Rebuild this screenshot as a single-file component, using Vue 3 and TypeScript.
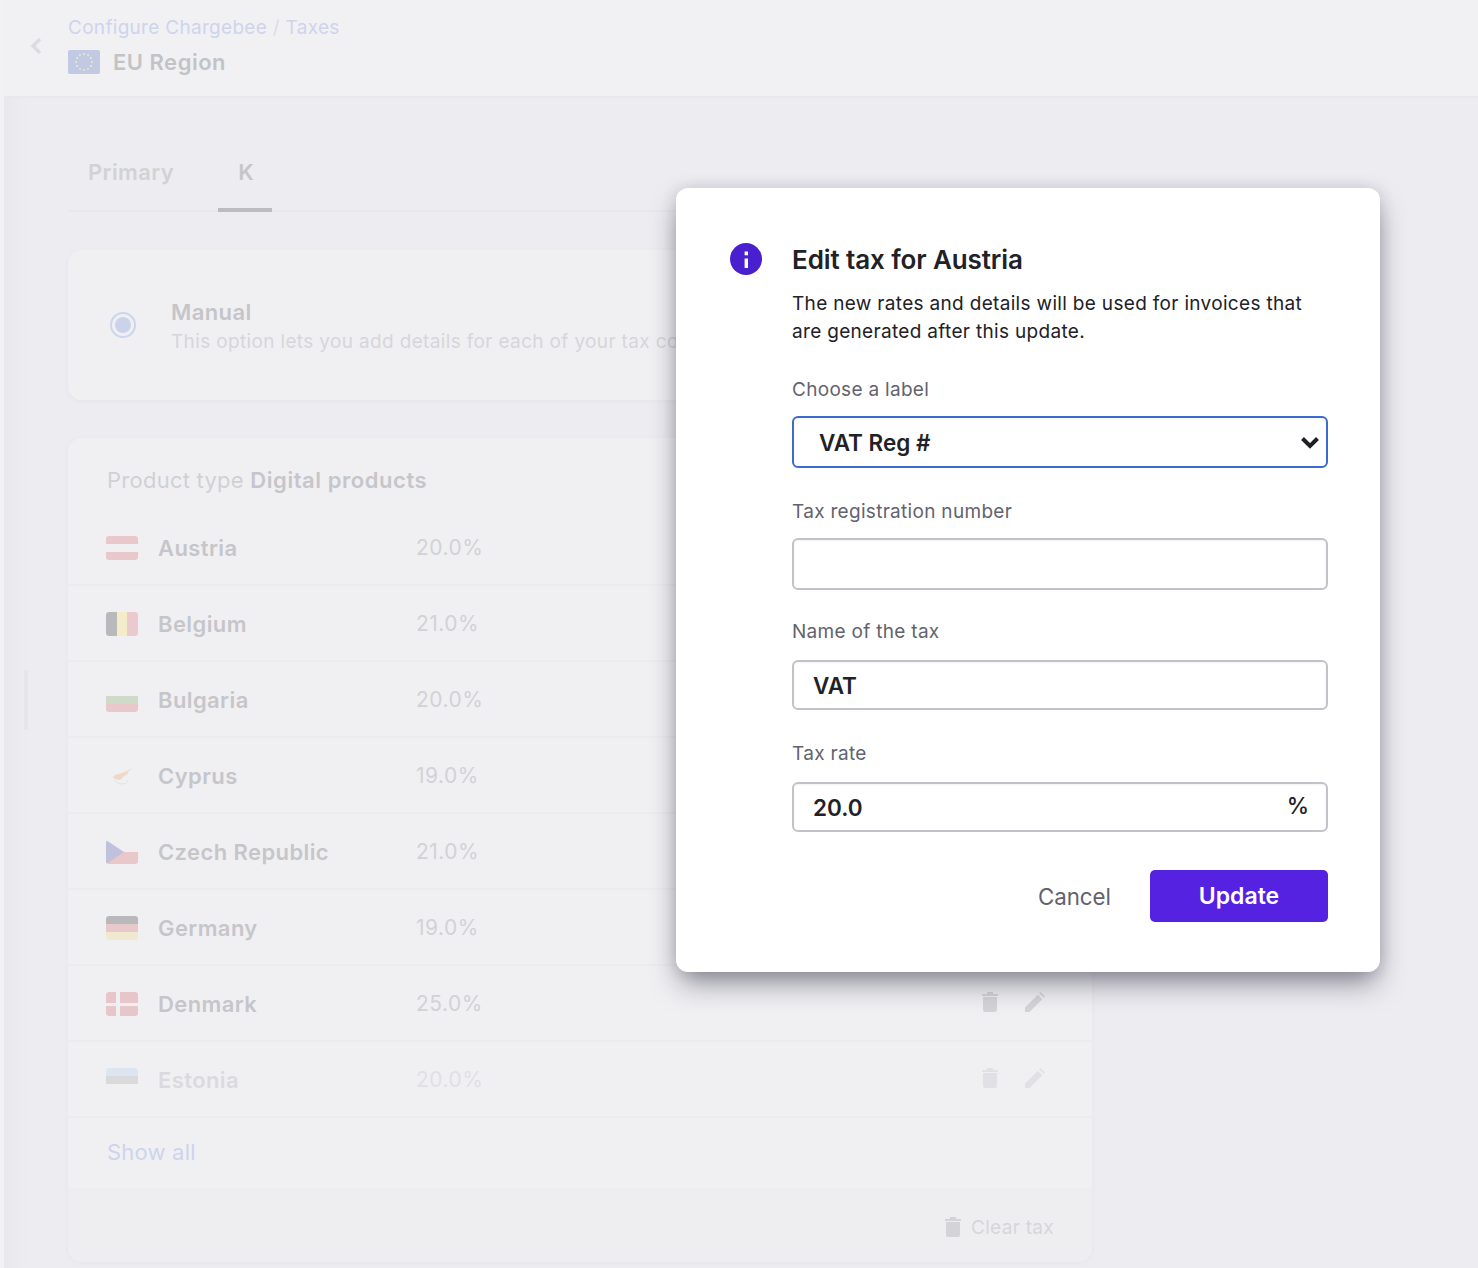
<script setup lang="ts">
interface Shape { x: number; y: number; w: number; h: number; c: string }
interface Row { name: string; rate: string; shapes: Shape[]; tri?: string; cyprus?: boolean; faded?: boolean }
const red = '#e8c8cb'
const rows: Row[] = [
  { name: 'Austria', rate: '20.0%', shapes: [{ x: 0, y: 0, w: 32, h: 8, c: red }, { x: 0, y: 16, w: 32, h: 8, c: red }] },
  { name: 'Belgium', rate: '21.0%', shapes: [{ x: 0, y: 0, w: 11, h: 24, c: '#b9b9bb' }, { x: 11, y: 0, w: 10, h: 24, c: '#f3ecc9' }, { x: 21, y: 0, w: 11, h: 24, c: '#ebcacf' }] },
  { name: 'Bulgaria', rate: '20.0%', shapes: [{ x: 0, y: 8, w: 32, h: 8, c: '#cddbc8' }, { x: 0, y: 16, w: 32, h: 8, c: red }] },
  { name: 'Cyprus', rate: '19.0%', shapes: [], cyprus: true },
  { name: 'Czech Republic', rate: '21.0%', shapes: [{ x: 0, y: 12, w: 32, h: 12, c: red }], tri: '#c0c1dc' },
  { name: 'Germany', rate: '19.0%', shapes: [{ x: 0, y: 0, w: 32, h: 8, c: '#b9b9bb' }, { x: 0, y: 8, w: 32, h: 8, c: red }, { x: 0, y: 16, w: 32, h: 8, c: '#f1e9cf' }] },
  { name: 'Denmark', rate: '25.0%', shapes: [{ x: 0, y: 0, w: 32, h: 24, c: '#e6c6cb' }, { x: 10, y: 0, w: 4, h: 24, c: '#f0f0f3' }, { x: 0, y: 11, w: 32, h: 3, c: '#f0f0f3' }] },
  { name: 'Estonia', rate: '20.0%', shapes: [{ x: 0, y: 0, w: 32, h: 8, c: '#dde5f1' }, { x: 0, y: 8, w: 32, h: 8, c: '#dadadc' }], faded: true },
]
const stars = Array.from({ length: 12 }, (_, i) => ({
  x: 16 + 8 * Math.cos((i * Math.PI) / 6),
  y: 12 + 8 * Math.sin((i * Math.PI) / 6),
}))
</script>

<template>
  <div class="page">
    <div class="handle"></div>
    <header class="top">
      <svg class="back" width="12" height="18" viewBox="0 0 12 18"><path d="M10 2 3 9l7 7" fill="none" stroke="#dcdce0" stroke-width="3.4" /></svg>
      <div class="top-text">
        <div class="crumbs">Configure Chargebee <span class="slash">/</span> Taxes</div>
        <div class="region">
          <svg class="eu" width="32" height="24" viewBox="0 0 32 24">
            <rect width="32" height="24" rx="2" fill="#c2c9e3" />
            <circle v-for="(s, i) in stars" :key="i" :cx="s.x" :cy="s.y" r="0.9" fill="#f3efc4" />
          </svg>
          <span>EU Region</span>
        </div>
      </div>
    </header>

    <main class="content">
      <nav class="tabs">
        <div class="tab">Primary</div>
        <div class="tab active">K</div>
      </nav>

      <section class="card manual">
        <span class="radio"><span class="dot"></span></span>
        <div class="manual-text">
          <div class="manual-title">Manual</div>
          <div class="manual-sub">This option lets you add details for each of your tax countries</div>
        </div>
      </section>

      <section class="card list">
        <div class="product">Product type <b>Digital products</b></div>
        <div v-for="r in rows" :key="r.name" class="row" :class="{ faded: r.faded }">
          <svg class="flag" width="32" height="24" viewBox="0 0 32 24">
            <rect v-for="(s, i) in r.shapes" :key="i" :x="s.x" :y="s.y" :width="s.w" :height="s.h" :fill="s.c" />
            <path v-if="r.tri" d="M0 0 18 12 0 24z" :fill="r.tri" />
            <template v-if="r.cyprus">
              <path d="M7 13c2-3 6-3 9-4 3-1 7-3 10-5l-4 4c0 3-3 3-5 5-1 2-3 3-4 3-2 0-5-1-6-3z" fill="#eed9c8" />
              <path d="M8 16c2 2 5 4 8 4s4-1 6-4" fill="none" stroke="#dfe3dc" stroke-width="1" />
            </template>
          </svg>
          <span class="country">{{ r.name }}</span>
          <span class="rate">{{ r.rate }}</span>
          <span class="actions">
            <svg class="trash" width="16" height="20" viewBox="0 0 16 20"><path d="M0 2h5V0h6v2h5v2H0zM1 5h14v13a2 2 0 0 1-2 2H3a2 2 0 0 1-2-2z" fill="#d4d4d8" /></svg>
            <svg class="pencil" width="20" height="20" viewBox="0 0 20 20"><path d="M0 15.5 12.8 2.700l4.500 4.500L4.500 20H0zM14.200 1.300 15.500 0 20 4.500l-1.300 1.300z" fill="#d4d4d8" /></svg>
          </span>
        </div>
        <div class="show-all">Show all</div>
        <div class="clear">
          <svg width="16" height="20" viewBox="0 0 16 20"><path d="M0 2h5V0h6v2h5v2H0zM1 5h14v13a2 2 0 0 1-2 2H3a2 2 0 0 1-2-2z" fill="#d4d4d8" /></svg>
          <span>Clear tax</span>
        </div>
      </section>
    </main>

    <div class="modal" role="dialog">
      <svg class="info" width="32" height="32" viewBox="0 0 32 32">
        <circle cx="16" cy="16" r="16" fill="#4a1fd0" />
        <rect x="14.600" y="15.500" width="3.400" height="9.500" fill="#fff" />
        <rect x="14.600" y="8.500" width="3.400" height="3.800" fill="#fff" />
      </svg>
      <div class="modal-body">
        <h2>Edit tax for Austria</h2>
        <p>The new rates and details will be used for invoices that are generated after this update.</p>
        <label class="field f-label">
          <span class="lbl">Choose a label</span>
          <span class="wrap">
            <select class="control select"><option>VAT Reg #</option></select>
            <svg class="chev" width="20" height="14" viewBox="0 0 20 14"><path d="M2.500 2.500 10 10l7.500-7.500" fill="none" stroke="#1f1f24" stroke-width="4" /></svg>
          </span>
        </label>
        <label class="field f-reg">
          <span class="lbl">Tax registration number</span>
          <input class="control tall" value="" />
        </label>
        <label class="field f-name">
          <span class="lbl">Name of the tax</span>
          <input class="control" value="VAT" />
        </label>
        <label class="field f-rate">
          <span class="lbl">Tax rate</span>
          <span class="wrap">
            <input class="control" value="20.0" />
            <span class="pct">%</span>
          </span>
        </label>
        <div class="buttons">
          <button class="cancel">Cancel</button>
          <button class="update">Update</button>
        </div>
      </div>
    </div>
  </div>
</template>

<style>
html, body { margin: 0; background: #edecf1; }
</style>

<style scoped>
.page {
  position: relative;
  width: 1478px;
  height: 1268px;
  overflow: hidden;
  background: #f2f2f4;
  padding-left: 4px;
  box-sizing: border-box;
  font-family: Inter, "Liberation Sans", sans-serif;
  display: flex;
  flex-direction: column;
}
.handle {
  position: absolute;
  left: 24px;
  top: 670px;
  width: 4px;
  height: 60px;
  border-radius: 2px;
  background: #e6e6ea;
  z-index: 1;
}
.top {
  height: 96px;
  flex: none;
  border-bottom: 2px solid #e9e9ec;
  background: #f1f1f4;
  display: flex;
  align-items: center;
  box-sizing: content-box;
}
.back { margin-left: 26px; margin-right: 26px; margin-top: -4px; flex: none; }
.top-text { display: flex; flex-direction: column; margin-top: -6px; }
.crumbs { font-size: 19px; line-height: 26px; color: #ced4ec; letter-spacing: 0.3px; }
.slash { color: #dcdce2; }
.region {
  display: flex; align-items: center; gap: 13px;
  font-size: 22px; line-height: 28px; font-weight: 600; color: #c3c3c6;
  letter-spacing: 0.5px;
  margin-top: 7px;
}
.eu { flex: none; }
.content {
  flex: 1;
  background: linear-gradient(to right, #e9e9ed, #edecf1 24px);
  padding: 0 0 0 64px;
  position: relative;
}
.tabs {
  width: 1024px;
  height: 114px;
  display: flex;
  align-items: flex-end;
  border-bottom: 2px solid #e8e8ec;
  box-sizing: border-box;
}
.tab {
  padding: 0 20px 12px;
  margin-bottom: -2px;
  height: 64px;
  box-sizing: border-box;
  display: flex;
  align-items: center;
  font-size: 22px;
  font-weight: 600;
  color: #d2d2d6;
  border-bottom: 4px solid transparent;
  letter-spacing: 0.4px;
}
.tab + .tab { margin-left: 24px; padding-right: 18px; }
.tab.active { color: #c6c6ca; border-bottom-color: #bcbcc0; }
.card {
  width: 1024px;
  background: #f0f0f3;
  border-radius: 14px;
  box-shadow: 0 1px 4px rgba(200, 200, 210, 0.2);
  box-sizing: border-box;
}
.manual {
  margin-top: 38px;
  height: 150px;
  display: flex;
  align-items: center;
  padding-left: 42px;
  gap: 35px;
}
.radio {
  width: 26px; height: 26px; border-radius: 50%;
  border: 2px solid #cdd5ee;
  box-sizing: border-box;
  display: flex; align-items: center; justify-content: center;
  flex: none;
}
.dot { width: 16px; height: 16px; border-radius: 50%; background: #cbd3ec; }
.manual-text { margin-top: 2px; white-space: nowrap; }
.manual-title { font-size: 22px; line-height: 28px; font-weight: 600; color: #c5c5c9; letter-spacing: 0.4px; }
.manual-sub { font-size: 19px; line-height: 26px; color: #d6d6da; letter-spacing: 0.35px; margin-top: 3px; }
.list { margin-top: 38px; height: 824px; overflow: hidden; }
.product {
  height: 72px;
  padding: 27px 0 0 39px;
  box-sizing: border-box;
  font-size: 22px; line-height: 30px; color: #d0d0d4;
  letter-spacing: 0.25px;
}
.product b { font-weight: 600; color: #c6c6ca; letter-spacing: 0.55px; }
.row {
  height: 76px;
  display: flex;
  align-items: center;
  padding: 2px 0 0 38px;
  border-bottom: 2px solid #ececef;
  box-sizing: border-box;
  position: relative;
}
.flag { flex: none; border-radius: 3px; overflow: hidden; }
.country {
  margin-left: 20px;
  width: 258px;
  font-size: 22px;
  font-weight: 600;
  color: #c6c6ca;
  letter-spacing: 0.4px;
  flex: none;
}
.rate { font-size: 21px; color: #d2d2d6; letter-spacing: 0.5px; margin-top: -2px; }
.actions {
  margin-left: auto;
  display: flex;
  align-items: center;
  gap: 27px;
  margin-right: 47px;
  margin-top: -4px;
}
.faded > :not(.flag) { opacity: 0.5; }
.show-all {
  height: 72px;
  padding: 0 0 2px 39px;
  display: flex;
  align-items: center;
  font-size: 22px;
  color: #cdd4ec;
  letter-spacing: 0.2px;
  border-bottom: 2px solid #ededf0;
  box-sizing: border-box;
  background: #f0f0f3;
}
.clear {
  height: 76px;
  display: flex;
  align-items: center;
  justify-content: flex-end;
  gap: 10px;
  padding: 0 38px 2px 0;
  box-sizing: border-box;
  background: #eeeef1;
  font-size: 19px;
  color: #d6d6da;
  letter-spacing: 0.3px;
}
.modal {
  position: absolute;
  left: 676px;
  top: 188px;
  width: 704px;
  height: 784px;
  background: #fff;
  border-radius: 12px;
  box-shadow: 0 14px 28px -4px rgba(30, 30, 50, 0.5), 0 0 16px rgba(30, 30, 50, 0.12);
  display: flex;
  box-sizing: border-box;
  padding: 55px 52px 0 54px;
  z-index: 2;
}
.info { flex: none; margin-right: 30px; }
.modal-body { flex: 1; min-width: 0; }
h2 {
  margin: 1px 0 0;
  font-size: 26px;
  line-height: 32px;
  font-weight: 600;
  color: #212126;
  letter-spacing: -0.1px;
}
p {
  margin: 14px 0 0;
  font-size: 19px;
  line-height: 28px;
  color: #212126;
  letter-spacing: 0.32px;
}
.field { display: block; }
.f-label { margin-top: 31px; }
.f-reg { margin-top: 31px; }
.f-name { margin-top: 29px; }
.f-rate { margin-top: 31px; }
.lbl {
  display: block;
  font-size: 19px;
  line-height: 26px;
  color: #63636e;
  letter-spacing: 0.3px;
  margin-bottom: 13px;
}
.f-name .lbl, .f-rate .lbl { margin-bottom: 15px; }
.wrap { display: block; position: relative; }
.control {
  display: block;
  width: 100%;
  height: 50px;
  box-sizing: border-box;
  border: 2px solid #c2c2c9;
  border-radius: 6px;
  padding: 0 19px;
  background: #fff;
  box-shadow: inset 0 1px 2px rgba(0, 0, 0, 0.05);
  font-family: inherit;
  font-size: 22.5px;
  font-weight: 600;
  color: #212126;
  outline: none;
}
.tall { height: 52px; }
.select {
  height: 52px;
  appearance: none;
  border-color: #3c6bcf;
  padding-left: 25px;
}
.chev { position: absolute; right: 8px; top: 20px; pointer-events: none; }
.pct { position: absolute; right: 19px; top: 10px; font-size: 22.5px; font-weight: 500; color: #212126; }
.buttons { display: flex; justify-content: flex-end; align-items: center; margin-top: 38px; gap: 39px; }
button { font-family: inherit; border: 0; cursor: pointer; }
.cancel { background: none; padding: 0; font-size: 22.3px; color: #62626d; }
.update {
  width: 178px;
  height: 52px;
  border-radius: 5px;
  background: #5622e2;
  color: #fff;
  font-size: 23px;
  font-weight: 600;
}
</style>
